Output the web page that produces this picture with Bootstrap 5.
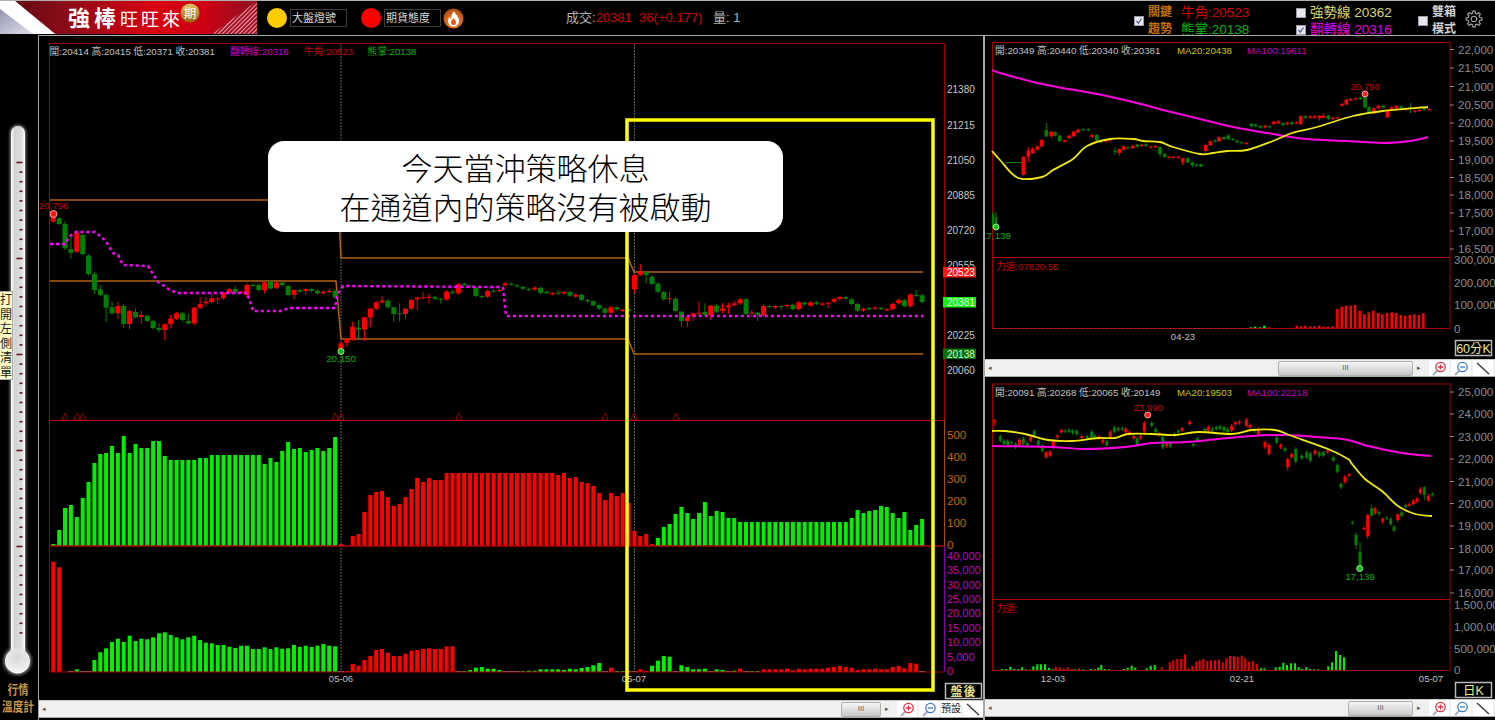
<!DOCTYPE html>
<html lang="zh-Hant">
<head>
<meta charset="utf-8">
<title>強棒旺旺來</title>
<link href="https://cdn.jsdelivr.net/npm/bootstrap@5.3.0/dist/css/bootstrap.min.css" rel="stylesheet">
<style>
html,body{height:720px;overflow:hidden;background:#000}
body,svg text{font-family:"Liberation Sans","Noto Sans CJK TC",sans-serif}
.app{width:1495px;height:720px;background:#000}
.topbar{height:35px;border-top:1px solid #b0b0b0;color:#c0c0c0}
.logo{width:257px;height:33px;flex:none;align-self:flex-start}
.lamp{width:20px;height:20px;border-radius:50%;flex:none}
.lamp-y{background:#ffcc00;margin-left:10px}
.lamp-r{background:#ff0000;margin-left:14px}
.lampbox{width:57px;height:18px;border:1px solid #3c3c3c;color:#d8d8d8;font-size:11px;line-height:16px;margin-left:3px;padding-left:1px;flex:none;white-space:nowrap}
.fire{margin-left:2px;flex:none}
.status{margin-left:102px;width:180px;font-size:13px;white-space:pre;flex:none;color:#b4b4b4}
.status b{font-weight:400;color:#d00000}
.chk{width:10px;height:10px;background:#e6e6ee;border:1px solid #9a9aa8;display:block;flex:none}
.chk svg{display:block}
.grp1{margin-left:388px;width:162px;flex:none;margin-top:6px}
.tlab{line-height:17px;white-space:nowrap}
.ogold{color:#c87000;font-size:12px;font-weight:700;margin-left:4px;width:33px}
.bull{font-size:13.5px}
.c-red{color:#d00000}.c-green{color:#00b800}
.grp2{width:122px;flex:none;font-size:13.5px;margin-top:6px}
.c-strong{color:#d8d870}.c-flip{color:#e000e0}
.grp3{width:36px;flex:none;color:#d0d0d0;font-size:12px;font-weight:700;margin-top:6px}
.gear{margin-left:11px;margin-top:2px;flex:none}
.lower{height:685px}
.thermo{width:38px;flex:none}
.thermo svg{display:block}
.cleartip{left:0;top:256px;width:13px;height:89px;background:#ffffc8;border:1px solid #a8a8a8;border-left:0;color:#222;font-size:12px;line-height:14.5px;padding-top:1px;text-align:center}
.mainc{width:947px;flex:none;border-left:1px solid #a8a8a8;border-right:2px solid #a8a8a8;border-top:1px solid #a8a8a8}
.chartsvg{display:block;background:#000}
.note{left:229px;top:105px;width:515px;height:91px;font-size:31px;line-height:38.5px;font-weight:300;font-family:"Noto Sans CJK TC",sans-serif;color:#000}
.sb{height:18px;background:#f0f0f0;border-top:1px solid #c8c8c8;border-bottom:1px solid #a8a8a8;flex:none}
.sbr{padding-right:2px}
.sb svg{display:block}
.sba{font-size:7px;color:#555;width:10px;text-align:center;flex:none}
.sbarr{margin-left:1px;margin-right:3px}
.sbt{height:15px;background:linear-gradient(#f6f6f6,#c8c8c8);border:1px solid #b0b0b0;border-radius:2px;font-size:8px;color:#666;line-height:12px;text-align:center;flex:none}
.sbb{width:20px;height:16px;background:#fff;margin-left:2px;flex:none;color:#222;font-size:10px;line-height:16px;text-align:center;white-space:nowrap}
.sbb:first-of-type{margin-left:0}
.rc{width:510px;flex:none;border-top:1px solid #a8a8a8}
.rp{width:510px}
.tx{font-size:9.7px}
.px{font-size:10px;fill:#c8c8c8}
.ax{font-size:11.5px}
</style>
</head>
<body>
<div class="app d-flex flex-column">
  <header class="topbar d-flex align-items-center">
    <svg class="logo" viewBox="0 0 257 33">
      <defs>
        <linearGradient id="lg" x1="0" x2="1" y1="0" y2="0"><stop offset="0" stop-color="#5a0a14"/><stop offset=".25" stop-color="#8a0c18"/><stop offset=".6" stop-color="#d80012"/><stop offset=".8" stop-color="#cc0012"/><stop offset="1" stop-color="#8c1222"/></linearGradient>
        <linearGradient id="lv" x1="0" x2="1" y1="0" y2="1"><stop offset="0" stop-color="#8888a8"/><stop offset="1" stop-color="#f4f4fa"/></linearGradient>
        <linearGradient id="lgo" x1="0" x2="0" y1="0" y2="1"><stop offset="0" stop-color="#e8c060"/><stop offset="1" stop-color="#9a6410"/></linearGradient>
        <pattern id="hat" width="3" height="3" patternUnits="userSpaceOnUse" patternTransform="rotate(45)"><rect width="3" height="3" fill="#a01426"/><rect width="1" height="3" fill="#f0a0a8"/></pattern>
      </defs>
      <rect width="257" height="33" fill="url(#lg)"/>
      <polygon points="0,0 15,0 55,33 0,33" fill="url(#lv)"/>
      <polygon points="0,0 15,0 55,33 33,33 0,8" fill="#fff"/>
      <polygon points="257,0 257,33 212,33" fill="url(#hat)"/>
      <text x="68" y="25" font-size="22" font-weight="700" fill="#fff" letter-spacing="4">強棒</text>
      <text x="120" y="24.5" font-size="18" fill="#fff" letter-spacing="3">旺旺來</text>
      <circle cx="190" cy="12" r="9.5" fill="url(#lgo)"/>
      <text x="190" y="16.5" font-size="12.5" fill="#fff" text-anchor="middle">期</text>
    </svg>
    <span class="lamp lamp-y"></span><span class="lampbox">大盤燈號</span>
    <span class="lamp lamp-r"></span><span class="lampbox">期貨態度</span>
    <svg class="fire" width="21" height="21" viewBox="0 0 21 21">
      <defs><radialGradient id="fg" cx=".5" cy=".7" r=".7"><stop offset="0" stop-color="#ff9030"/><stop offset="1" stop-color="#b04810"/></radialGradient></defs>
      <circle cx="10.5" cy="10.5" r="10" fill="url(#fg)"/>
      <path d="M11 3c1 3 5 5 5 10a5.5 5.5 0 0 1-11 0c0-2 1-3.5 2-4.5 0 1.500.5 2.500 1.500 3C8 8 9 5 11 3z" fill="#fff"/>
      <path d="M10.500 10c.5 1.500 2.500 2.500 2.500 4.500a2.500 2.500 0 0 1-5 0c0-2 2-3 2.500-4.500z" fill="#f05010"/>
    </svg>
    <div class="status">成交:<b>20381  36(+0.177)</b>   量: 1</div>
    <div class="grp1 d-flex align-items-center">
      <span class="chk"><svg width="8" height="8" viewBox="0 0 8 8"><path d="M1.500 4l1.800 2.200L6.500 1.500" fill="none" stroke="#5060a0" stroke-width="1.200"/></svg></span>
      <div class="ogold tlab">關鍵<br>趨勢</div>
      <div class="bull tlab"><span class="c-red">牛角:20523</span><br><span class="c-green">熊掌:20138</span></div>
    </div>
    <div class="grp2 d-flex flex-column">
      <div class="d-flex align-items-center tlab"><span class="chk me-1"></span><span class="c-strong">強勢線 20362</span></div>
      <div class="d-flex align-items-center tlab"><span class="chk me-1"><svg width="8" height="8" viewBox="0 0 8 8"><path d="M1.500 4l1.800 2.200L6.500 1.500" fill="none" stroke="#5060a0" stroke-width="1.200"/></svg></span><span class="c-flip">翻轉線 20316</span></div>
    </div>
    <div class="grp3 d-flex align-items-center"><span class="chk me-1"></span><div class="tlab">雙箱<br>模式</div></div>
    <svg class="gear" width="18" height="18" viewBox="-9 -9 18 18"><path id="gearp" fill="none" stroke="#a8a8a8" stroke-width="1.100"/><circle r="2.800" fill="none" stroke="#a8a8a8" stroke-width="1.100"/></svg>
  </header>

  <div class="lower d-flex">
    <aside class="thermo position-relative">
      <svg width="38" height="685" viewBox="0 35 38 685">
        <defs>
          <linearGradient id="tb" x1="0" x2="1" y1="0" y2="0"><stop offset="0" stop-color="#fff"/><stop offset=".25" stop-color="#d4d4d4"/><stop offset=".75" stop-color="#dcdcdc"/><stop offset="1" stop-color="#fff"/></linearGradient>
          <radialGradient id="tbu" cx=".5" cy=".35" r=".7"><stop offset="0" stop-color="#d8d8d8"/><stop offset=".7" stop-color="#ececec"/><stop offset="1" stop-color="#fff"/></radialGradient>
          <filter id="gl" x="-60%" y="-5%" width="220%" height="110%"><feGaussianBlur stdDeviation="1.500"/></filter>
        </defs>
        <rect x="10" y="125" width="16" height="530" rx="8" fill="#fff" opacity=".55" filter="url(#gl)"/>
        <circle cx="17.500" cy="661" r="14" fill="#fff" opacity=".5" filter="url(#gl)"/>
        <rect x="11" y="126" width="14" height="530" rx="7" fill="url(#tb)"/>
        <circle cx="17.500" cy="661" r="12.500" fill="url(#tbu)"/>
        <g id="tticks"></g>
        <text x="18" y="694" font-size="13" font-weight="700" fill="#c89448" text-anchor="middle" textLength="21" lengthAdjust="spacingAndGlyphs">行情</text>
        <text x="18" y="711" font-size="13" font-weight="700" fill="#c89448" text-anchor="middle" textLength="32" lengthAdjust="spacingAndGlyphs">溫度計</text>
      </svg>
      <div class="cleartip position-absolute">打<br>開<br>左<br>側<br>清<br>單</div>
    </aside>

    <main class="mainc d-flex flex-column">
      <div class="position-relative">
        <svg class="chartsvg" width="944" height="664" viewBox="39 36 944 664">
          <g id="mframe"></g>
          <text class="tx" x="49.500" y="54.500" fill="#c0c0c0">開:20414 高:20415 低:20371 收:20381</text>
          <text class="tx" x="230" y="54.500" fill="#c000c0">翻轉線:20316</text>
          <text class="tx" x="304" y="54.500" fill="#c00000">牛角:20523</text>
          <text class="tx" x="367.500" y="54.500" fill="#00b000">熊掌:20138</text>
          <g id="mvol"></g>
          <g id="mlines"></g>
          <g id="mcand"></g>
          <g id="mdots"></g>
          <circle cx="53.500" cy="214" r="3.500" fill="#ff1a1a" stroke="#ff9c9c"/>
          <text class="tx" x="53.500" y="209" fill="#c00000" text-anchor="middle">20,796</text>
          <circle cx="341" cy="351.500" r="3" fill="#16b016" stroke="#90e890"/>
          <text class="tx" x="341" y="362" fill="#00b000" text-anchor="middle">20,150</text>
          <g class="px">
            <text x="947" y="93">21380</text><text x="947" y="129">21215</text><text x="947" y="164">21050</text><text x="947" y="199">20885</text><text x="947" y="234">20720</text><text x="947" y="269">20555</text><text x="947" y="339">20225</text><text x="947" y="374">20060</text>
          </g>
          <rect x="943" y="267" width="33" height="10.500" fill="#ff1414"/><text class="px" x="947" y="276" style="fill:#fff">20523</text>
          <rect x="943" y="297" width="33" height="10.500" fill="#12f012"/><text class="px" x="947" y="306" style="fill:#e4ffe4">20381</text>
          <rect x="943" y="348.500" width="33" height="10.500" fill="#0a700a"/><text class="px" x="947" y="357.500" style="fill:#cfc">20138</text>
          <g font-size="11.500" fill="#c86400"><text x="947" y="439">500</text><text x="947" y="461">400</text><text x="947" y="483">300</text><text x="947" y="505">200</text><text x="947" y="527">100</text><text x="947" y="549">0</text></g>
          <g font-size="11" fill="#c000c0"><text x="947" y="560">40,000</text><text x="947" y="574">35,000</text><text x="947" y="589">30,000</text><text x="947" y="603">25,000</text><text x="947" y="617">20,000</text><text x="947" y="632">15,000</text><text x="947" y="646">10,000</text><text x="947" y="661">5,000</text><text x="947" y="675">0</text></g>
          <text x="341" y="681.500" font-size="9.500" fill="#c0c0c0" text-anchor="middle">05-06</text>
          <text x="634" y="681.500" font-size="9.500" fill="#c0c0c0" text-anchor="middle">05-07</text>
          <rect x="627" y="120" width="306" height="570" fill="none" stroke="#ffff00" stroke-width="3.500"/>
          <rect x="945.500" y="683.500" width="36" height="15" fill="#000" stroke="#b8b8b8" stroke-width="1.500"/>
          <text x="963.500" y="695.500" font-size="12" font-weight="700" fill="#e0e090" text-anchor="middle" letter-spacing="1">盤後</text>
        </svg>
        <div class="note position-absolute bg-white rounded-4 text-center d-flex flex-column justify-content-center"><div>今天當沖策略休息</div><div>在通道內的策略沒有被啟動</div></div>
      </div>
      <div class="sb d-flex align-items-center">
        <span class="sba">◂</span>
        <span class="ms-auto sbt" style="width:40px">III</span><span class="sba sbarr">▸</span>
        <span class="sbb zi"></span><span class="sbb zo"></span><span class="sbb">預設</span><span class="sbb dl"></span>
      </div>
    </main>

    <section class="rc d-flex flex-column">
      <div class="rp">
        <svg class="chartsvg" width="510" height="323" viewBox="985 37 510 323">
          <rect x="992.500" y="43.500" width="457.500" height="286" fill="none" stroke="#a00000"/>
          <line x1="992" x2="1450" y1="258.500" y2="258.500" stroke="#b00000"/>
          <text class="tx" x="995" y="54.500" fill="#c0c0c0">開:20349 高:20440 低:20340 收:20381</text>
          <text class="tx" x="1177" y="54.500" fill="#c8c800">MA20:20438</text>
          <text class="tx" x="1247" y="54.500" fill="#c000c0">MA100:19611</text>
          <text class="tx" x="996" y="270.500" fill="#c00000">力道:67820.55</text>
          <g id="rtc"></g>
          <g id="rtv"></g>
          <polyline class="sm" fill="none" stroke="#ff00e0" stroke-width="2" points="992,71 1000,74 1033,83 1057,88 1097,95 1133,103 1167,112 1200,120 1233,128 1267,134 1307,140 1347,142 1383,144 1410,142 1428,138"/>
          <polyline class="sm" fill="none" stroke="#f0e810" stroke-width="1.800" points="992,152 1000,161 1018,179 1042,178 1053,171 1073,160 1087,147 1110,140 1133,140 1143,142 1160,143 1173,148 1200,155 1213,154 1227,152 1247,151 1273,142 1292,134 1317,128 1353,117 1383,112 1428,108"/>
          <circle cx="1365" cy="95" r="3" fill="#ff2020" stroke="#ffa0a0"/>
          <text class="tx" x="1365" y="90.500" fill="#c00000" text-anchor="middle">20,796</text>
          <circle cx="996" cy="228" r="3" fill="#16c016" stroke="#90e890"/>
          <text class="tx" x="996" y="239.500" fill="#00b000" text-anchor="middle">17,139</text>
          <g class="ax" fill="#8c8c8c"><text x="1458" y="54.500">22,000</text><text x="1458" y="73">21,500</text><text x="1458" y="91.500">21,000</text><text x="1458" y="110">20,500</text><text x="1458" y="128">20,000</text><text x="1458" y="146">19,500</text><text x="1458" y="164.500">19,000</text><text x="1458" y="182.500">18,500</text><text x="1458" y="200">18,000</text><text x="1458" y="218">17,500</text><text x="1458" y="236">17,000</text><text x="1458" y="254">16,500</text><text x="1454" y="265">300,000</text><text x="1454" y="288">200,000</text><text x="1454" y="310">100,000</text><text x="1454" y="333.500">0</text></g>
          <g id="rtt"></g>
          <text x="1183" y="340.500" font-size="9.500" fill="#c0c0c0" text-anchor="middle">04-23</text>
          <rect x="1455.500" y="341.500" width="36" height="15" fill="#000" stroke="#b8b8b8" stroke-width="1.500"/>
          <text x="1473.500" y="353.500" font-size="12.500" fill="#e8e890" text-anchor="middle">60分K</text>
        </svg>
      </div>
      <div class="sb sbr d-flex align-items-center">
        <span class="sba">◂</span>
        <span class="ms-auto sbt" style="width:135px">III</span><span class="sba sbarr">▸</span>
        <span class="sbb zi"></span><span class="sbb zo"></span><span class="sbb dl"></span>
      </div>
      <div class="rp">
        <svg class="chartsvg" width="510" height="322" viewBox="985 378 510 322">
          <rect x="992.500" y="385" width="457.500" height="286.500" fill="none" stroke="#a00000"/>
          <line x1="992" x2="1450" y1="600.500" y2="600.500" stroke="#b00000"/>
          <text class="tx" x="995" y="396.500" fill="#c0c0c0">開:20091 高:20268 低:20065 收:20149</text>
          <text class="tx" x="1177" y="396.500" fill="#c8c800">MA20:19503</text>
          <text class="tx" x="1247" y="396.500" fill="#c000c0">MA100:22218</text>
          <text class="tx" x="996" y="612.500" fill="#c00000">力道:</text>
          <g id="rbc"></g>
          <g id="rbv"></g>
          <polyline class="sm" fill="none" stroke="#ff00e0" stroke-width="2" points="992,447 1052,448 1085,450 1125,448 1152,444 1185,443 1218,440 1252,437 1285,436 1318,438 1348,441 1368,447 1402,454 1431,457"/>
          <polyline class="sm" fill="none" stroke="#f0e810" stroke-width="1.800" points="992,432 1005,432 1025,435 1048,441 1072,442 1098,439 1115,439 1128,435 1152,435 1175,436 1198,433 1232,435 1252,431 1275,431 1292,437 1328,450 1348,460 1352,465 1365,480 1382,492 1398,507 1415,515 1432,517"/>
          <circle cx="1147.700" cy="416" r="3" fill="#ff2020" stroke="#ffa0a0"/>
          <text class="tx" x="1148" y="411.500" fill="#c00000" text-anchor="middle">23,990</text>
          <circle cx="1359.700" cy="569.500" r="3" fill="#16c016" stroke="#90e890"/>
          <text class="tx" x="1360" y="580.500" fill="#00b000" text-anchor="middle">17,139</text>
          <g class="ax" fill="#8c8c8c"><text x="1458" y="397">25,000</text><text x="1458" y="419">24,000</text><text x="1458" y="441.500">23,000</text><text x="1458" y="464">22,000</text><text x="1458" y="486.500">21,000</text><text x="1458" y="508.500">20,000</text><text x="1458" y="531">19,000</text><text x="1458" y="553.500">18,000</text><text x="1458" y="575">17,000</text><text x="1458" y="598">16,000</text><text x="1454" y="610">1,500,000</text><text x="1454" y="632">1,000,000</text><text x="1454" y="654">500,000</text><text x="1454" y="675">0</text></g>
          <g id="rbt"></g>
          <g font-size="9.500" fill="#c0c0c0" text-anchor="middle"><text x="1053" y="682.500">12-03</text><text x="1242" y="682.500">02-21</text><text x="1431" y="682.500">05-07</text></g>
          <rect x="1455.500" y="683.500" width="36" height="15" fill="#000" stroke="#b8b8b8" stroke-width="1.500"/>
          <text x="1473.500" y="695.500" font-size="12.500" fill="#e8e890" text-anchor="middle">日K</text>
        </svg>
      </div>
      <div class="sb sbr d-flex align-items-center">
        <span class="sba">◂</span>
        <span class="ms-auto sbt" style="width:65px">III</span><span class="sba sbarr">▸</span>
        <span class="sbb zi"></span><span class="sbb zo"></span><span class="sbb dl"></span>
      </div>
    </section>
  </div>
</div>
<script src="https://cdn.jsdelivr.net/npm/bootstrap@5.3.0/dist/js/bootstrap.bundle.min.js"></script>
<script>
const $=id=>document.getElementById(id);
const G='#008000',R='#ff0000',VG='#00f000',VR='#ff0000';
function cand(x,col,top,bot,hi,lo,w){const c=col==='r'?R:G;
  let s=`<line x1="${x}" x2="${x}" y1="${hi}" y2="${lo}" stroke="${c}"/>`;
  s+=`<rect x="${x-w/2}" y="${top}" width="${w}" height="${Math.max(bot-top,1)}" fill="${c}"/>`;return s;}
/* main chart */
const X=i=>53.3+i*5.87;
const mc=`r -70 -55|g -65 -48|g -48 25 -56 30|g 27 38 -10 55|r -21 35 -30|g -15 42|g 47 102|g 102 150 95 162|g 148 165 135|g 165 203 160 245|g 202 220 185|r 198 220 185 238|g 198 252 192 265|r 213 252 208 268|g 216 232 205|r 225 231 213 252|g 227 243|g 243 264|g 264 270 250 278|r 253 270 250 300|r 236 252 225 265|r 220 236|g 220 240|g 243 250 222|r 203 250 200 257|r 192 203 172|r 185 190 172 200|r 175 186 160|r 175 177 172 192|r 158 175|r 147 158|g 147 158 138|r 155 158|r 135 165 130 172|g 135 137|g 135 150|r 128 150 125 160|g 125 145|r 128 143|g 128 135|g 138 165|r 150 165 148 178|g 150 155|r 147 153 145 165|g 147 153|g 152 160|r 155 160|r 153 155 145|g 152 172|r 310 332|r 298 308 295 320|r 260 298 245|g 263 268 240 295|r 232 268 230 303|r 206 232 204 262|r 187 206|r 182 187 168|g 182 202|g 202 222 200 245|g 220 222 190 245|r 206 222 204 238|r 180 206|r 173 178 170 210|r 172 174 157|r 170 172 162 190|g 171 176|g 176 178 174 190|r 155 178|g 155 158|r 133 160|g 132 135|g 137 140|g 142 168|g 168 170 166 178|r 153 170|g 152 155|r 150 153|r 130 136|g 131 134|g 136 139|g 141 146|g 147 149|r 143 148|g 144 158|g 156 158|r 160 162|g 158 160 150|r 156 160|g 156 167|r 164 170|g 164 180|g 180 184|g 184 196|g 195 206|g 206 218|r 202 218|g 202 208|r 210 212|g 208 213|r 105 148 102 160|r 96 104 72|g 96 105 94 130|g 110 132|g 131 155|g 156 178|r 175 178 155 190|g 176 213|g 215 243 213 260|r 232 243 230 262|r 220 229 218 243|r 218 220 185 228|g 216 225 190|r 197 226 195 240|g 197 215|r 206 212 190 220|r 196 202 188 222|r 190 195 182 200|r 178 190|g 178 222|r 218 221 210 230|g 218 226 216 243|r 198 226|g 198 201|r 198 203|g 198 201 196 210|r 195 198 193 205|g 195 207|r 187 207|g 188 193|r 188 196|g 187 191|r 191 193|r 188 191 186 205|r 177 185|r 171 177|g 171 176|g 178 192|g 192 212|r 206 212|g 204 208|r 203 206|g 204 207|r 208 210|r 192 207|r 181 189|g 181 198|r 164 198|g 165 167 150|g 166 186`.split('|');
let s='';mc.forEach((e,i)=>{const p=e.split(' ');const t=+p[1],b=+p[2],h=p[3]!==undefined?+p[3]:t-4,l=p[4]!==undefined?+p[4]:b+4;
  s+=cand(X(i).toFixed(1),p[0],240+t/3,240+b/3,240+h/3,240+l/3,5);});
$('mcand').innerHTML=s;
/* frames */
let f=`<line x1="49.5" x2="944" y1="43.5" y2="43.5" stroke="#a00000"/>
<line x1="49.5" x2="49.5" y1="43.5" y2="672" stroke="#a00000"/>
<line x1="944.5" x2="944.5" y1="43.5" y2="420" stroke="#a00000"/>
<line x1="944.5" x2="944.5" y1="420" y2="546" stroke="#a05000"/>
<line x1="944.5" x2="944.5" y1="546" y2="672" stroke="#8000a0"/>
<line x1="341" x2="341" y1="44" y2="672" stroke="#606060" stroke-dasharray="2 1"/>
<line x1="634.5" x2="634.5" y1="44" y2="672" stroke="#606060" stroke-dasharray="2 1"/>`;
[65,77,82.5,335,341,458.7,605,634,676].forEach(x=>{f+=`<path d="M${x-2.5} 420V418L${x} 413L${x+2.5} 418V420Z" fill="none" stroke="#900000"/>`});
$('mframe').innerHTML=f;
/* main volumes */
let v1=[544,530,508,505,517,498,482,463,454,453,446,453,436,453,444,448,448,441,441,456,460,460,460,460,460,458,458,455,455,455,455,455,455,455,455,455,464,458,462,451,442,449,448,452,450,448,451,448,437,544,0,536,534,512,495,492,491,497,506,504,497,489,478,482,478,480,480];
for(let i=67;i<=85;i++)v1.push(473);
v1=v1.concat([475,473,478,477,482,483,486,493,500,493,496,493,503,531,536,534,544,538,527,524,514,507,513,519,513,502,516,511,512,518,518]);
for(let i=117;i<=135;i++)v1.push(522);
v1=v1.concat([518,510,513,511,510,506,507,513,518,512,530,525,519]);
const V2=[245,262,0,575,568,575,575,540,517,505,486,476,486,467,483,476,478,472,460,457,465,472,478,472,467,480,488,490,495,495,500,504,497,497,507,507,502,507,502,506,505,495,501,497,501,497,492,497,499,575,573,552,557,540,528,510,507,518,528,528,521,512,510,507,505,507,507,499,499,575,573,570,563,561,566,566,570,575,575,575,573,572,572,568,568,568,568,570,566,568,564,561,556,549,575,563,573,573,573,575,568,572,557,542,528,530,575,556,561,568,568,566,575,568,570,575,572,566,575,573,573,568,568,568,568,566,571,566,568,566,566,566,563,561,558,561,563,570,568,568,566,568,568,561,558,565,549,551,575];
const isG1=i=>i<=48||i>=103;
const redV2=i=>i<2||(i>=50&&i<=68)||i==95||i==100||i==101||(i>=117&&i!=118&&i!=119&&i!=120);
let v='';
v1.forEach((y,i)=>{if(!y)return;v+=`<rect x="${(X(i)-2).toFixed(1)}" y="${y}" width="4" height="${546-y}" fill="${isG1(i)?VG:VR}"/>`;});
V2.forEach((z,i)=>{if(!z)return;if(z>=575){v+=`<rect x="${(X(i)-3).toFixed(1)}" y="671" width="6" height="1" fill="#808890"/>`;return;}
  const y=480+z/3;v+=`<rect x="${(X(i)-2).toFixed(1)}" y="${y.toFixed(1)}" width="4" height="${(672-y).toFixed(1)}" fill="${redV2(i)?VR:VG}"/>`;});
v+=`<line x1="50" x2="944" y1="420.5" y2="420.5" stroke="#c80000" stroke-width="1.2"/><line x1="50" x2="944" y1="546" y2="546" stroke="#b00000" stroke-width="1.5"/><line x1="50" x2="944" y1="672" y2="672" stroke="#b00000"/>`;
$('mvol').innerHTML=v;
/* main lines */
$('mlines').innerHTML=`<polyline fill="none" stroke="#b06010" stroke-width="1.500" points="50,200 338,200 341,258 628,258 634,272 923,272"/>
<polyline fill="none" stroke="#b06010" stroke-width="1.500" points="50,281 336,281 341,339 628,339 634,354 923,354"/>`;
$('mdots').innerHTML=`<polyline fill="none" stroke="#ff00ff" stroke-width="2.400" stroke-dasharray="3 3" points="50,244 65,244 70,236 76,232 95,232 105,240 113,253 118,255 123,265 148,266 158,282 170,290 177,293 247,293 253,311 283,311 288,308 335,308 337,297 340,290 343,286 500,287 503,288 506,316 923,316"/>`;
/* right-top candles */
const rt=`70 r 473 527 473 530|85 r 455 473 445 490|98 r 450 462 445 465|112 r 442 452|125 r 423 442|139 g 393 412 372 415|154 r 398 412 396 418|165 g 400 410|179 g 410 426|194 r 424 428 422 430|207 r 410 417|221 r 398 412|234 r 392 400|250 g 391 393|265 g 391 393|276 r 408 414|290 g 408 425|303 g 427 430|318 r 425 428|330 r 422 425|345 g 455 460 445 468|358 r 450 462 448 470|371 r 442 452|384 g 445 448|398 r 441 447|412 g 437 443|425 r 437 441|438 g 436 441|452 r 443 445|466 r 441 445|480 g 444 465 442 475|494 g 465 473|507 r 473 476|520 r 473 476|535 r 473 476|548 r 478 490 476 498|563 g 478 490|577 g 490 498 488 505|590 g 497 500|603 g 496 502|617 r 438 456 436 462|631 r 427 438|645 g 424 428|657 r 415 426|672 g 415 420|685 g 409 420|699 g 420 423|711 g 425 430|725 g 430 433|739 r 432 434|754 g 374 382 372 386|767 g 377 382|781 g 381 386|795 r 380 385|809 g 382 385|821 r 368 375|835 r 367 373|849 g 373 378|862 r 371 376|876 g 370 375|889 r 370 373|902 r 352 375|916 g 352 357|930 r 352 356|943 r 352 356|958 r 350 358 348 365|970 r 350 356 342 358|985 g 350 360|998 r 357 360|1012 r 355 358|1026 r 315 320|1039 r 302 316|1052 r 300 304|1067 r 298 301|1081 g 296 300|1095 g 287 325|1107 g 325 341|1121 r 328 343|1135 r 320 328|1149 g 320 326|1162 r 335 355|1175 r 325 333|1189 r 321 327|1203 g 322 327|1217 r 328 332|1231 g 325 330 312 342|1244 r 335 338|1258 r 333 336|1273 g 328 332|1287 r 330 333`.split('|');
s='<line x1="1005" x2="1022" y1="163.5" y2="163.5" stroke="#008000"/>'+cand(993,'g',215,228,213,230,2.5)+cand(996,'g',218,228,213,230,2.5);
rt.forEach(e=>{const p=e.split(' ');const t=+p[2],b=+p[3],h=p[4]?+p[4]:t-3,l=p[5]?+p[5]:b+3;s+=cand((1000+p[0]/3).toFixed(1),p[1],(t/3).toFixed(1),(b/3).toFixed(1),(h/3).toFixed(1),(l/3).toFixed(1),3.6);});
$('rtc').innerHTML=s;
/* right-top volume */
const rtv=[[797,385,1],[810,383,1],[825,385,1],[838,380,1],[852,385,0],[865,387,0],[878,387,0],[892,387,0],[905,387,0],[918,387,0],[935,380,0],[947,382,0],[960,380,0],[975,382,0],[988,382,0],[1002,380,0],[1015,383,0],[1028,383,0],[1042,382,0],[1057,330,0],[1070,323,0],[1083,320,0],[1097,320,0],[1110,318,0],[1124,335,0],[1138,346,0],[1151,340,0],[1165,335,0],[1179,342,0],[1192,346,0],[1206,342,0],[1220,340,0],[1233,342,0],[1247,348,0],[1260,350,0],[1274,348,0],[1288,346,0],[1301,348,0],[1315,343,0]];
s='<line x1="993" x2="1248" y1="329.5" y2="329.5" stroke="#8090a0" stroke-dasharray="3 1"/>';
rtv.forEach(b=>{const y=200+b[1]/3;s+=`<rect x="${(985+b[0]/3-1.2).toFixed(1)}" y="${y.toFixed(1)}" width="2.500" height="${(329.5-y).toFixed(1)}" fill="${b[2]?VG:VR}"/>`;});
s+='<line x1="992" x2="1450" y1="329.5" y2="329.5" stroke="#a00000" stroke-opacity=".7"/>';
$('rtv').innerHTML=s;
/* right-bottom candles */
const rb8=`28 r 665 668 660 680|46 g 712 725|57 g 725 735|68 g 725 738|80 g 730 733|92 g 735 745|103 r 722 738|115 g 718 735|127 g 733 740|137 r 714 725|148 g 696 712|160 g 725 737|172 g 740 755|183 r 760 775|195 r 758 770|205 r 725 745|217 r 710 715|229 r 693 700|240 g 695 698|252 g 693 698|263 g 695 702|275 g 696 705|290 r 712 717|307 g 712 718|320 g 698 715|330 g 710 715|342 r 712 718|353 r 722 730|365 g 728 738|376 r 698 716|388 g 685 699|400 g 688 693|412 g 688 692|422 r 689 700|434 r 698 705|446 r 712 718|456 g 718 735|466 r 712 718|478 r 672 697|500 g 672 680|512 g 690 700|522 r 703 708|533 g 715 745|545 r 733 742|556 g 733 742|568 g 705 710|580 g 695 700|591 r 688 695|614 r 668 675|625 g 735 740|637 g 718 725|660 g 690 697|670 r 684 695|682 g 690 695|694 g 685 690|705 g 682 690|717 g 685 695|728 g 690 700|740 r 680 695|751 r 670 676|763 r 668 672|784 r 662 680|795 r 678 685|808 g 690 697|820 r 690 705|840 r 730 745|852 r 738 765|875 g 715 730|887 r 738 745|900 g 748 755|920 r 765 775|932 g 750 780|950 g 770 778|965 g 760 775|976 g 763 780|990 r 755 765|1003 g 760 770|1015 g 760 770|1028 r 755 760`.split('|');
const rb9=`908 r 0 25 -5 35|932 g -5 8|976 g -5 5|1045 g -5 5|1057 g 18 38|1068 g 75 85|1080 r 53 70|1092 r 46 50|1102 g 190 192|1113 g 228 258 220 270|1125 g 278 328 250 330|1137 r 207 210|1148 r 167 232 165 240|1160 g 148 170 138 172|1170 r 148 163|1182 g 160 165|1193 r 178 188 176 195|1205 g 176 179|1217 g 180 195|1227 g 203 215|1238 r 165 183 163 190|1250 g 160 170|1262 g 138 144|1273 r 135 140|1285 r 125 135|1296 r 118 128|1306 r 90 102|1318 g 85 107 82 122|1330 r 110 124|1342 g 105 108`.split('|');
s='';
const addB=(list,oy)=>list.forEach(e=>{const p=e.split(' ');const t=+p[2],b=+p[3],h=p[4]?+p[4]:t-5,l=p[5]?+p[5]:b+5;s+=cand((985+p[0]/3).toFixed(1),p[1],(oy+t/3).toFixed(1),(oy+b/3).toFixed(1),(oy+h/3).toFixed(1),(oy+l/3).toFixed(1),3);});
addB(rb8,200);addB(rb9,460);
$('rbc').innerHTML=s;
/* right-bottom volume */
const rbv='52 630 g,64 630 g,76 623 g,88 630 g,100 630 g,111 625 g,123 631 g,134 631 r,145 622 g,157 616 g,168 616 g,180 616 g,192 627 g,203 631 g,212 623 r,224 625 r,236 628 r,248 625 r,260 630 r,270 631 g,282 628 r,295 631 g,318 630 g,330 631 g,340 626 g,349 618 g,360 630 g,372 631 g,417 630 g,428 626 g,440 620 g,451 626 g,485 628 g,497 620 g,509 618 g,530 625 r,542 632 r,554 610 r,565 604 r,577 600 r,589 600 r,600 586 r,610 628 r,622 620 r,634 608 r,644 604 r,655 600 r,667 606 r,678 604 r,690 604 r,702 602 r,713 610 r,724 598 r,735 591 r,747 592 r,758 594 r,770 590 r,781 598 r,792 608 r,803 606 r,815 614 r,828 628 g,838 628 g,872 625 g,884 623 g,895 611 g,906 618 g,918 613 g,930 613 g,941 625 g,951 630 g,964 625 g,975 630 g,987 631 g,1000 631 g,1030 622 g,1041 610 g,1053 576 g,1065 588 g,1077 595 g'.split(',');
s='<line x1="1347" x2="1430" y1="671.5" y2="671.5" stroke="#8090a0" stroke-dasharray="3 1"/>';
rbv.forEach(e=>{const p=e.split(' ');const y=460+p[1]/3;s+=`<rect x="${(985+p[0]/3-1).toFixed(1)}" y="${y.toFixed(1)}" width="2" height="${(671.5-y).toFixed(1)}" fill="${p[2]=='r'?'#ee0000':VG}"/>`;});
s+='<line x1="992" x2="1450" y1="671.5" y2="671.5" stroke="#a00000" stroke-opacity=".8"/>';
$('rbv').innerHTML=s;
/* axis ticks */
const tk=(a)=>a.map(y=>`<line x1="1450" x2="1454" y1="${y}" y2="${y}" stroke="#8c8c8c"/>`).join('');
$('rtt').innerHTML=tk([50.5,69,87.5,106,124,142,160.5,178.5,196,214,232,250]);
$('rbt').innerHTML=tk([393,415,437.5,460,482.5,504.5,527,549.5,571,594]);
/* smooth moving-average lines */
document.querySelectorAll('polyline.sm').forEach(pl=>{
  const P=pl.getAttribute('points').trim().split(/\s+/).map(a=>a.split(',').map(Number));
  let d=`M${P[0][0]} ${P[0][1]}`;
  for(let i=0;i<P.length-1;i++){const a=P[Math.max(i-1,0)],b=P[i],c=P[i+1],e=P[Math.min(i+2,P.length-1)];
    d+=`C${(b[0]+(c[0]-a[0])/6).toFixed(1)} ${(b[1]+(c[1]-a[1])/6).toFixed(1)} ${(c[0]-(e[0]-b[0])/6).toFixed(1)} ${(c[1]-(e[1]-b[1])/6).toFixed(1)} ${c[0]} ${c[1]}`;}
  const n=document.createElementNS('http://www.w3.org/2000/svg','path');
  n.setAttribute('d',d);n.setAttribute('fill','none');n.setAttribute('stroke',pl.getAttribute('stroke'));n.setAttribute('stroke-width',pl.getAttribute('stroke-width'));
  pl.replaceWith(n);
});
/* thermometer ticks */
s='';for(let k=0;k<=50;k++){const y=161.7+k*9.6;if(y>640)break;const lg=k%10==0;
 s+=`<rect x="${lg?16.5:19.5}" y="${y.toFixed(1)}" width="${lg?6:3}" height="1.600" fill="#6a1420"/>`;}
$('tticks').innerHTML=s;
/* gear */
let d='';const n=8;for(let i=0;i<n;i++){const a=i*2*Math.PI/n,st=2*Math.PI/n;
 const P=(r,t)=>`${(r*Math.cos(t)).toFixed(2)} ${(r*Math.sin(t)).toFixed(2)}`;
 d+=(i?'L':'M')+P(5.8,a-st*.5)+'L'+P(6,a-st*.3)+'L'+P(8,a-st*.18)+'L'+P(8,a+st*.18)+'L'+P(6,a+st*.3);}
$('gearp').setAttribute('d',d+'Z');
/* tool buttons */
const mag=(c,sym)=>`<svg width="20" height="16" viewBox="0 0 20 16"><line x1="4" y1="15" x2="8.500" y2="10.500" stroke="#a8b0c0" stroke-width="2"/><circle cx="11.500" cy="7" r="4.700" fill="#fff" stroke="${c}" stroke-width="1.300"/><path d="${sym}" stroke="${c}" stroke-width="1.300"/></svg>`;
document.querySelectorAll('.zi').forEach(e=>e.innerHTML=mag('#e03040','M9 7h5M11.500 4.500v5'));
document.querySelectorAll('.zo').forEach(e=>e.innerHTML=mag('#4078c8','M9 7h5'));
document.querySelectorAll('.dl').forEach(e=>e.innerHTML='<svg width="20" height="16" viewBox="0 0 20 16"><line x1="4" y1="3" x2="16" y2="14" stroke="#333" stroke-width="1.300"/></svg>');
</script>
</body>
</html>
